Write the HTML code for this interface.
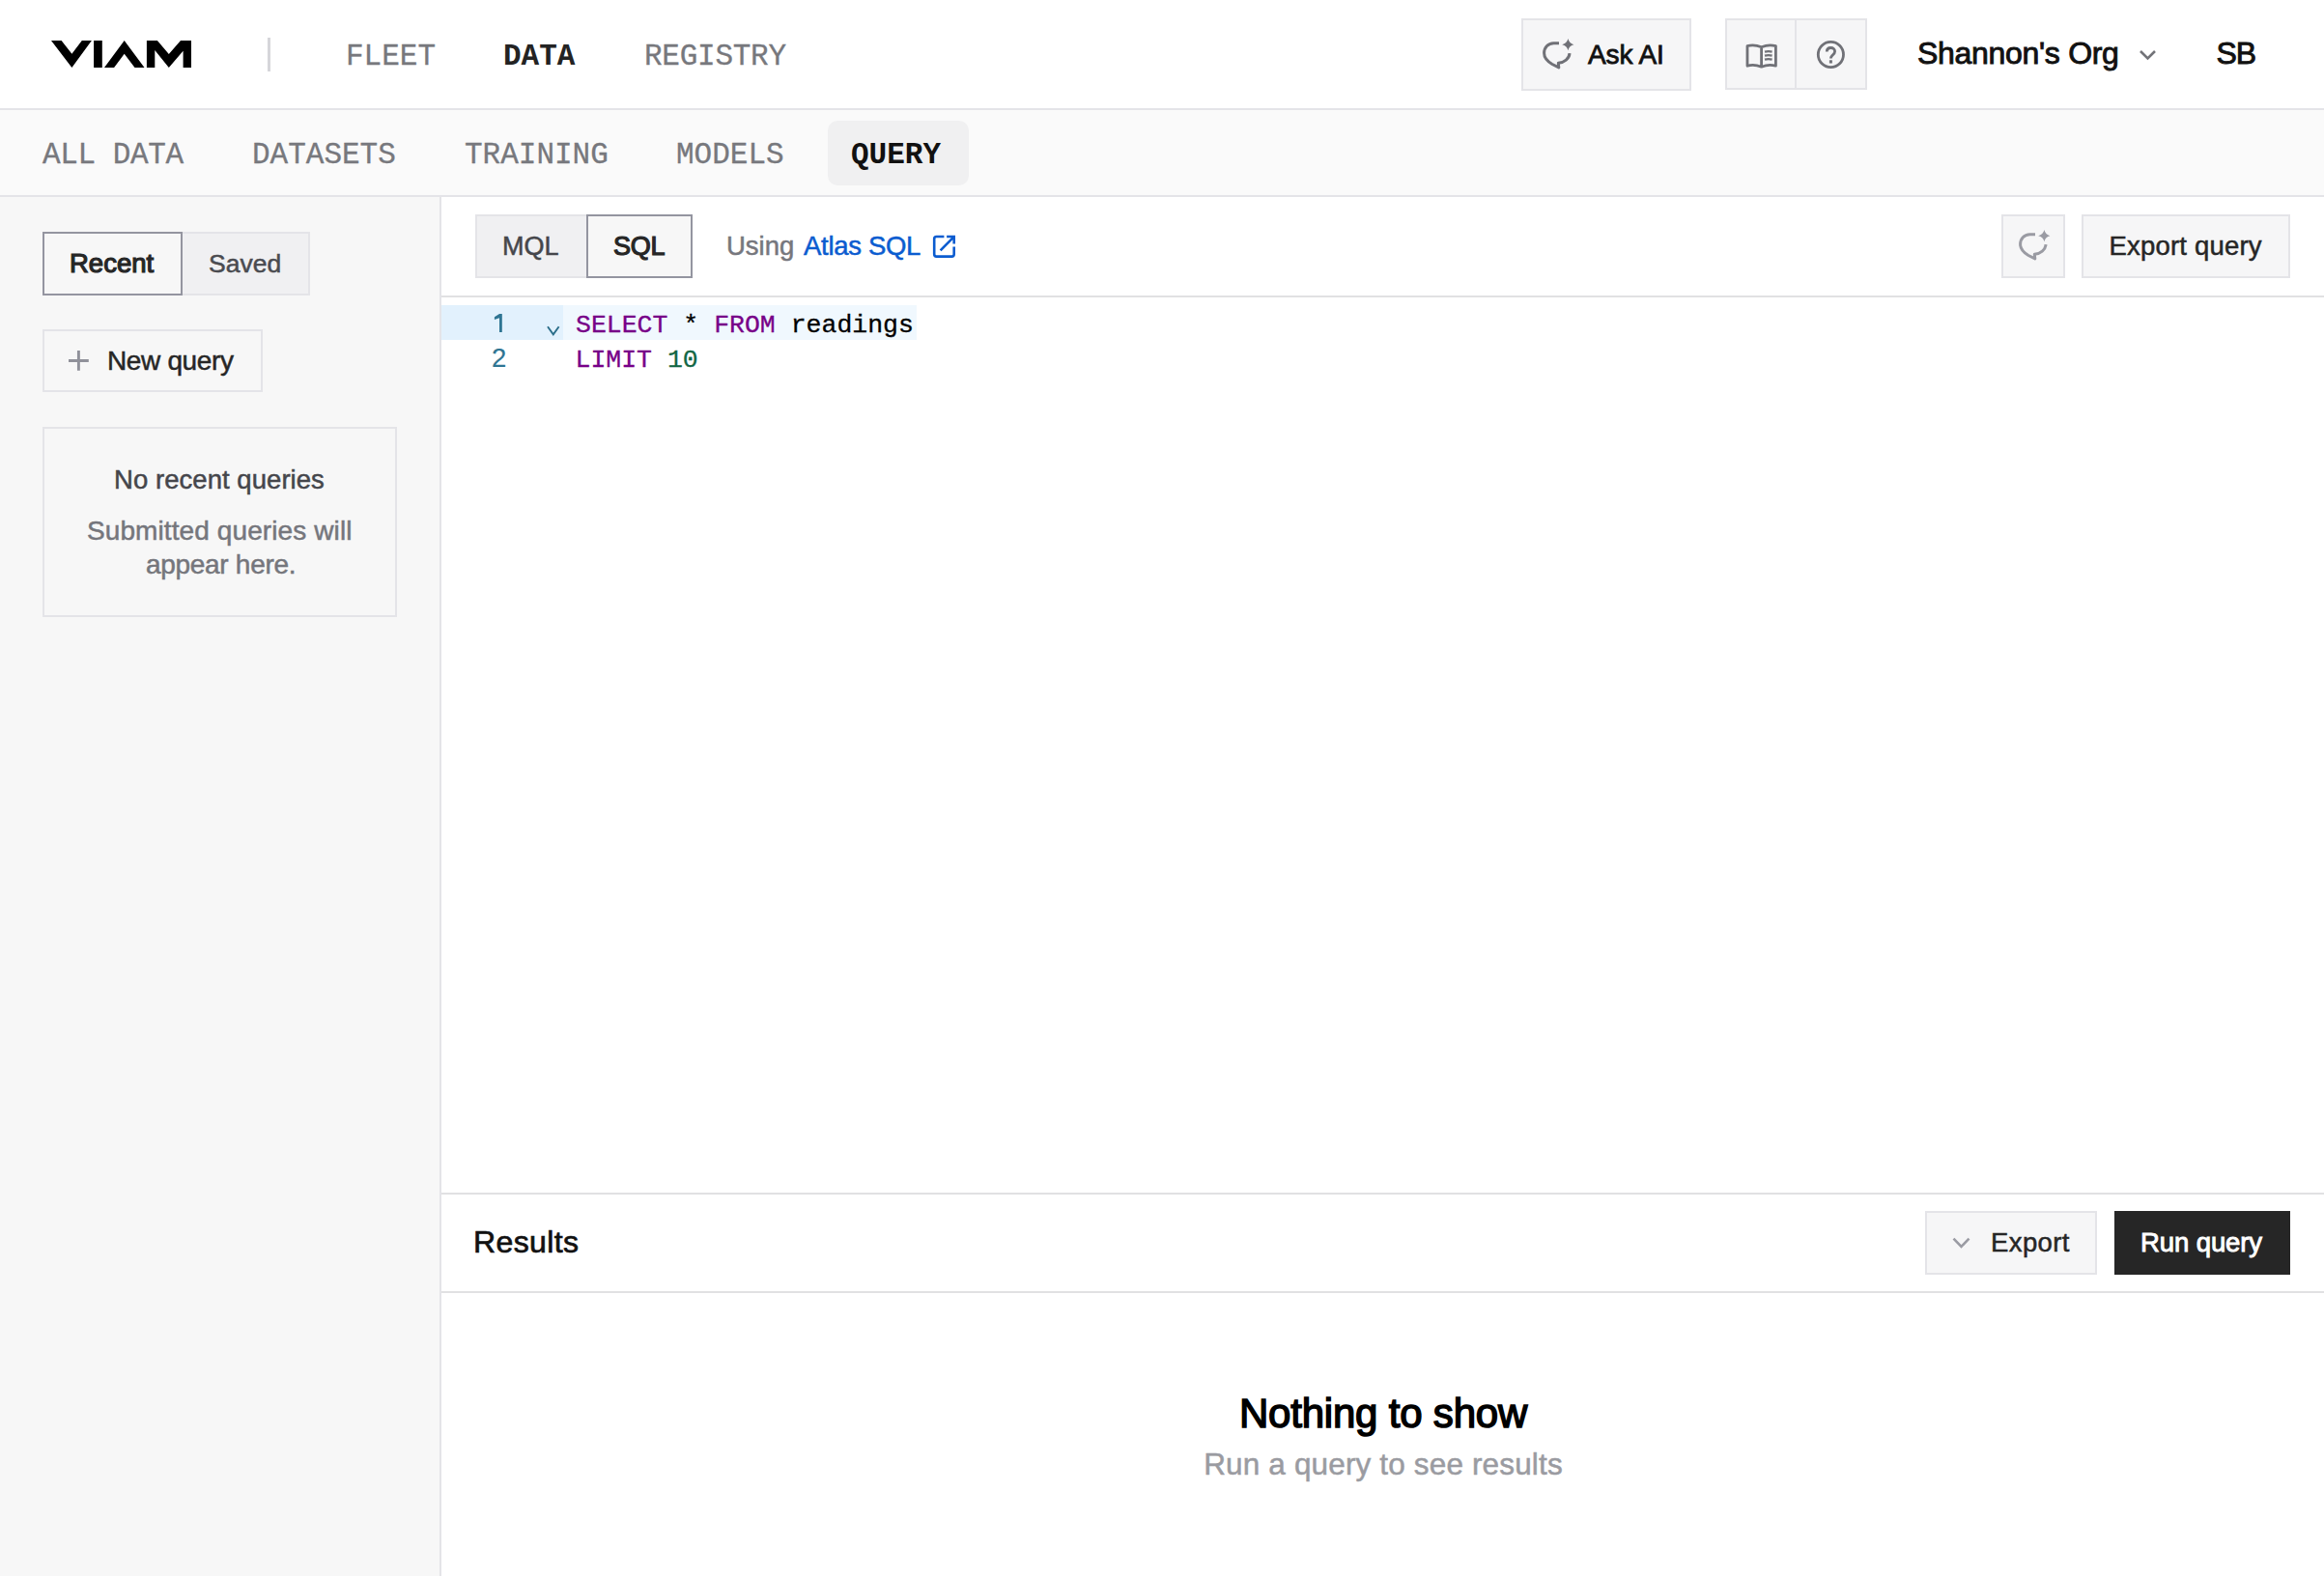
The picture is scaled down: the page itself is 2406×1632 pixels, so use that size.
<!DOCTYPE html>
<html><head><meta charset="utf-8"><title>Query</title>
<style>
html,body{margin:0;padding:0;}
body{width:2406px;height:1632px;overflow:hidden;position:relative;background:#fff;font-family:"Liberation Sans", sans-serif;}
.a{position:absolute;box-sizing:border-box;}
.t{position:absolute;white-space:nowrap;line-height:normal;}
svg{position:absolute;left:0;top:0;overflow:visible;}
</style></head><body>
<!-- header -->
<div class="a" style="left:0;top:112px;width:2406px;height:2px;background:#e4e4e8"></div>
<div class="a" style="left:277px;top:39px;width:2.5px;height:34.5px;background:#d6d6da"></div>
<div class="a" style="left:1575px;top:19px;width:176px;height:75px;border:2px solid #e4e4e8;background:#f6f6f7"></div>
<div class="a" style="left:1786px;top:19px;width:147px;height:74px;border:2px solid #e4e4e8;background:#f6f6f7"></div>
<div class="a" style="left:1858px;top:19px;width:2px;height:74px;background:#e4e4e8"></div>
<!-- subnav -->
<div class="a" style="left:0;top:114px;width:2406px;height:88px;background:#fafafa"></div>
<div class="a" style="left:0;top:202px;width:2406px;height:2px;background:#e4e4e8"></div>
<div class="a" style="left:857px;top:125px;width:146px;height:67px;border-radius:10px;background:#f0f0f1"></div>
<!-- sidebar -->
<div class="a" style="left:0;top:204px;width:455px;height:1428px;background:#f7f7f7"></div>
<div class="a" style="left:455px;top:204px;width:2px;height:1428px;background:#e4e4e8"></div>
<div class="a" style="left:187px;top:240px;width:134px;height:66px;border:2px solid #e4e4e8;background:#f0f0f2"></div>
<div class="a" style="left:44px;top:240px;width:145px;height:66px;border:2px solid #9495a0;background:#f7f7f7"></div>
<div class="a" style="left:44px;top:341px;width:228px;height:65px;border:2px solid #e4e4e8;background:#f7f7f7"></div>
<div class="a" style="left:44px;top:442px;width:367px;height:197px;border:2px solid #e4e4e8;background:#f7f7f7"></div>
<!-- toolbar -->
<div class="a" style="left:457px;top:306px;width:1949px;height:2px;background:#e1e1e3"></div>
<div class="a" style="left:492px;top:222px;width:117px;height:66px;border:2px solid #e4e4e8;background:#f0f0f2"></div>
<div class="a" style="left:607px;top:222px;width:110px;height:66px;border:2px solid #9495a0;background:#f7f7f7"></div>
<div class="a" style="left:2072px;top:222px;width:66px;height:66px;border:2px solid #e4e4e8;background:#f6f6f7"></div>
<div class="a" style="left:2155px;top:222px;width:216px;height:66px;border:2px solid #e4e4e8;background:#f6f6f7"></div>
<!-- editor -->
<div class="a" style="left:457px;top:316px;width:126px;height:36px;background:#e2f1fd"></div>
<div class="a" style="left:583px;top:316px;width:366px;height:36px;background:#f0f8fe"></div>
<!-- results -->
<div class="a" style="left:457px;top:1235px;width:1949px;height:2px;background:#e1e1e3"></div>
<div class="a" style="left:457px;top:1337px;width:1949px;height:2px;background:#e1e1e3"></div>
<div class="a" style="left:1993px;top:1254px;width:178px;height:66px;border:2px solid #e4e4e8;background:#f6f6f7"></div>
<div class="a" style="left:2189px;top:1254px;width:182px;height:66px;background:#262626"></div>

<svg width="2406" height="1632" viewBox="0 0 2406 1632">
 <!-- logo -->
 <path fill="#000" d="M53,41.9 L63.6,41.9 L74.4,55.7 L84.8,41.9 L94.9,41.9 L74.4,69.9 Z M97.1,41.9 H105.8 V69.9 H97.1 Z M128.7,41.9 L149.5,69.9 L139.5,69.9 L128.7,55.7 L118.1,69.9 L108,69.9 Z M151.9,41.9 L162.9,41.9 L174.8,56 L187,41.9 L198,41.9 L198,69.9 L189.6,69.9 L189.6,52.7 L174.8,69.9 L160.3,52 L160.3,69.9 L151.9,69.9 Z"/>
 <!-- ask ai icon -->
 <g id="aiicon" fill="none" stroke="#707177" stroke-width="3" stroke-linejoin="round">
  <path d="M1614,44.7 L1608.5,44.7 C1602.5,44.7 1598.6,49.5 1598.6,55 C1598.6,60 1602,63.5 1607,66.5 L1613.8,69.9 L1613.3,65.3 C1619.5,64.8 1624.6,60.8 1625,55.2"/>
 </g>
 <path fill="#707177" d="M1623.4,40 Q1624.6,45 1629.4,46.2 Q1624.6,47.4 1623.4,52.2 Q1622.2,47.4 1617.2,46.2 Q1622.2,45 1623.4,40 Z"/>
 <!-- book -->
 <g fill="none" stroke="#707177" stroke-width="2.8" stroke-linejoin="round">
  <path d="M1809,47.6 Q1816,45.6 1823.6,48.8 Q1831,45.6 1838.4,47.6 V68.2 Q1831,66.2 1823.6,69.2 Q1816,66.2 1809,68.2 Z M1823.6,48.8 V69"/>
  <path stroke-width="2.2" d="M1827,53.6 Q1831,52.6 1834.6,53.6 M1827,57.6 Q1831,56.6 1834.6,57.6 M1827,61.6 Q1831,60.6 1834.6,61.6"/>
 </g>
 <!-- question -->
 <g fill="none" stroke="#707177" stroke-width="2.8">
  <circle cx="1895.4" cy="56.5" r="13.1"/>
  <path d="M1891.3,53.6 C1891.3,51 1893.1,49.5 1895.4,49.5 C1897.8,49.5 1899.6,51.1 1899.6,53.3 C1899.6,55.4 1898.1,56.4 1896.9,57.5 C1895.9,58.5 1895.4,59.4 1895.4,60.6"/>
 </g>
 <rect x="1893.9" y="62.3" width="3" height="3.2" fill="#707177"/>
 <!-- org chevron -->
 <path fill="none" stroke="#727378" stroke-width="2.6" d="M2216,53 L2223.5,60.4 L2231,53"/>
 <!-- plus -->
 <path fill="none" stroke="#90919a" stroke-width="2.9" d="M71,373.5 H91.8 M81.4,363 V383.8"/>
 <!-- external link -->
 <g fill="none" stroke="#0b5cd0" stroke-width="2.6">
  <path d="M977.4,245 H969.5 Q967.2,245 967.2,247.3 V263.3 Q967.2,265.6 969.5,265.6 H985.4 Q987.7,265.6 987.7,263.3 V255.5"/>
  <path d="M980.1,245 H987.7 V252.5 M973.6,259.3 L987.2,245.6"/>
 </g>
 <!-- toolbar ai icon (shifted) -->
 <g transform="translate(493,198)">
  <path fill="none" stroke="#9a9ba3" stroke-width="3" stroke-linejoin="round" d="M1614,44.7 L1608.5,44.7 C1602.5,44.7 1598.6,49.5 1598.6,55 C1598.6,60 1602,63.5 1607,66.5 L1613.8,69.9 L1613.3,65.3 C1619.5,64.8 1624.6,60.8 1625,55.2"/>
  <path fill="#9a9ba3" d="M1623.4,40 Q1624.6,45 1629.4,46.2 Q1624.6,47.4 1623.4,52.2 Q1622.2,47.4 1617.2,46.2 Q1622.2,45 1623.4,40 Z"/>
 </g>
 <!-- line number 1 -->
 <path fill="#2f7593" d="M517,325 H519.8 V344 H517 V329.3 L511.9,331 V328.3 Z"/>
 <!-- fold chevron -->
 <path fill="none" stroke="#2b6e8a" stroke-width="1.9" d="M567,338.3 L572.8,346.3 L578.6,338.3"/>
 <!-- export chevron -->
 <path fill="none" stroke="#9a9ba3" stroke-width="2.6" d="M2022.5,1282.7 L2030.5,1290.8 L2038.5,1282.7"/>
</svg>
<div class="t" id="fleet" style='top:41.40px;font-family:"Liberation Mono", monospace;font-weight:400;font-size:31px;letter-spacing:0px;color:#77787d;-webkit-text-stroke:0.3px currentColor;left:358px;'>FLEET</div>
<div class="t" id="data" style='top:41.40px;font-family:"Liberation Mono", monospace;font-weight:700;font-size:31px;letter-spacing:0px;color:#232323;left:521px;'>DATA</div>
<div class="t" id="registry" style='top:41.40px;font-family:"Liberation Mono", monospace;font-weight:400;font-size:31px;letter-spacing:-0.25px;color:#77787d;-webkit-text-stroke:0.3px currentColor;left:667px;'>REGISTRY</div>
<div class="t" id="askai" style='top:41.00px;font-family:"Liberation Sans", sans-serif;font-weight:400;font-size:28px;letter-spacing:-0.1px;color:#111111;-webkit-text-stroke:0.8px currentColor;left:1644px;'>Ask AI</div>
<div class="t" id="org" style='top:37.00px;font-family:"Liberation Sans", sans-serif;font-weight:400;font-size:32px;letter-spacing:-0.3px;color:#111111;-webkit-text-stroke:0.9px currentColor;left:1985px;'>Shannon's Org</div>
<div class="t" id="sb" style='top:37.00px;font-family:"Liberation Sans", sans-serif;font-weight:400;font-size:32px;letter-spacing:-1px;color:#111111;-webkit-text-stroke:0.9px currentColor;left:2294.5px;'>SB</div>
<div class="t" id="alldata" style='top:143.00px;font-family:"Liberation Mono", monospace;font-weight:400;font-size:31px;letter-spacing:-0.4px;color:#77787d;-webkit-text-stroke:0.3px currentColor;left:44px;'>ALL DATA</div>
<div class="t" id="datasets" style='top:143.00px;font-family:"Liberation Mono", monospace;font-weight:400;font-size:31px;letter-spacing:0px;color:#77787d;-webkit-text-stroke:0.3px currentColor;left:261px;'>DATASETS</div>
<div class="t" id="training" style='top:143.00px;font-family:"Liberation Mono", monospace;font-weight:400;font-size:31px;letter-spacing:0px;color:#77787d;-webkit-text-stroke:0.3px currentColor;left:481px;'>TRAINING</div>
<div class="t" id="models" style='top:143.00px;font-family:"Liberation Mono", monospace;font-weight:400;font-size:31px;letter-spacing:0px;color:#77787d;-webkit-text-stroke:0.3px currentColor;left:700px;'>MODELS</div>
<div class="t" id="query" style='top:143.00px;font-family:"Liberation Mono", monospace;font-weight:700;font-size:31px;letter-spacing:0px;color:#111111;left:881px;'>QUERY</div>
<div class="t" id="recent" style='top:257.20px;font-family:"Liberation Sans", sans-serif;font-weight:400;font-size:27.5px;letter-spacing:0px;color:#262626;-webkit-text-stroke:1.2px currentColor;left:72px;'>Recent</div>
<div class="t" id="saved" style='top:258.20px;font-family:"Liberation Sans", sans-serif;font-weight:400;font-size:26.5px;letter-spacing:0px;color:#4a4b50;-webkit-text-stroke:0.5px currentColor;left:216px;'>Saved</div>
<div class="t" id="newq" style='top:358.00px;font-family:"Liberation Sans", sans-serif;font-weight:400;font-size:28px;letter-spacing:-0.35px;color:#262626;-webkit-text-stroke:0.5px currentColor;left:111px;'>New query</div>
<div class="t" id="norecent" style='top:481.20px;font-family:"Liberation Sans", sans-serif;font-weight:400;font-size:27.5px;letter-spacing:0.05px;color:#45464b;-webkit-text-stroke:0.5px currentColor;left:118px;'>No recent queries</div>
<div class="t" id="submitted" style='top:533.50px;font-family:"Liberation Sans", sans-serif;font-weight:400;font-size:28px;letter-spacing:0.1px;color:#75767c;-webkit-text-stroke:0.5px currentColor;left:90px;'>Submitted queries will</div>
<div class="t" id="appear" style='top:568.70px;font-family:"Liberation Sans", sans-serif;font-weight:400;font-size:28px;letter-spacing:-0.3px;color:#75767c;-webkit-text-stroke:0.5px currentColor;left:151px;'>appear here.</div>
<div class="t" id="mql" style='top:240.10px;font-family:"Liberation Sans", sans-serif;font-weight:400;font-size:27px;letter-spacing:0px;color:#45464b;-webkit-text-stroke:0.5px currentColor;left:520px;'>MQL</div>
<div class="t" id="sql" style='top:240.10px;font-family:"Liberation Sans", sans-serif;font-weight:400;font-size:27px;letter-spacing:-0.2px;color:#262626;-webkit-text-stroke:1.2px currentColor;left:635px;'>SQL</div>
<div class="t" id="using" style='top:238.90px;font-family:"Liberation Sans", sans-serif;font-weight:400;font-size:27.5px;letter-spacing:0px;color:#76777d;-webkit-text-stroke:0.5px currentColor;left:752px;'>Using</div>
<div class="t" id="atlas" style='top:238.90px;font-family:"Liberation Sans", sans-serif;font-weight:400;font-size:27.5px;letter-spacing:-0.3px;color:#0b5cd0;-webkit-text-stroke:0.5px currentColor;left:832px;'>Atlas SQL</div>
<div class="t" id="expq" style='top:238.90px;font-family:"Liberation Sans", sans-serif;font-weight:400;font-size:27.5px;letter-spacing:0.2px;color:#262626;-webkit-text-stroke:0.5px currentColor;left:2183.5px;'>Export query</div>
<div class="t" id="ln2" style='top:355.00px;font-family:"Liberation Sans", sans-serif;font-weight:400;font-size:27.5px;letter-spacing:0px;color:#2f7593;-webkit-text-stroke:0.15px currentColor;left:509px;'>2</div>
<div class="t" id="code1" style='top:322.30px;font-family:"Liberation Mono", monospace;font-weight:400;font-size:26.5px;letter-spacing:0px;color:#000000;-webkit-text-stroke:0.3px currentColor;left:596px;'><span style="color:#770088">SELECT</span> * <span style="color:#770088">FROM</span> readings</div>
<div class="t" id="code2" style='top:358.00px;font-family:"Liberation Mono", monospace;font-weight:400;font-size:26.5px;letter-spacing:0px;color:#000000;-webkit-text-stroke:0.3px currentColor;left:595.5px;'><span style="color:#770088">LIMIT</span> <span style="color:#116644">10</span></div>
<div class="t" id="results" style='top:1268.00px;font-family:"Liberation Sans", sans-serif;font-weight:400;font-size:32px;letter-spacing:0.4px;color:#111111;-webkit-text-stroke:0.7px currentColor;left:490px;'>Results</div>
<div class="t" id="export" style='top:1271.20px;font-family:"Liberation Sans", sans-serif;font-weight:400;font-size:27.5px;letter-spacing:0.4px;color:#262626;-webkit-text-stroke:0.5px currentColor;left:2061px;'>Export</div>
<div class="t" id="runq" style='top:1271.20px;font-family:"Liberation Sans", sans-serif;font-weight:400;font-size:27.5px;letter-spacing:-0.1px;color:#ffffff;-webkit-text-stroke:0.9px currentColor;left:2216px;'>Run query</div>
<div class="t" id="nothing" style='top:1440.20px;font-family:"Liberation Sans", sans-serif;font-weight:400;font-size:42px;letter-spacing:-0.2px;color:#000000;-webkit-text-stroke:1.5px currentColor;left:832.0px;width:1200px;text-align:center;'>Nothing to show</div>
<div class="t" id="runa" style='top:1497.70px;font-family:"Liberation Sans", sans-serif;font-weight:400;font-size:31.5px;letter-spacing:0.15px;color:#9a9ba1;-webkit-text-stroke:0.5px currentColor;left:832.0px;width:1200px;text-align:center;'>Run a query to see results</div>
</body></html>
